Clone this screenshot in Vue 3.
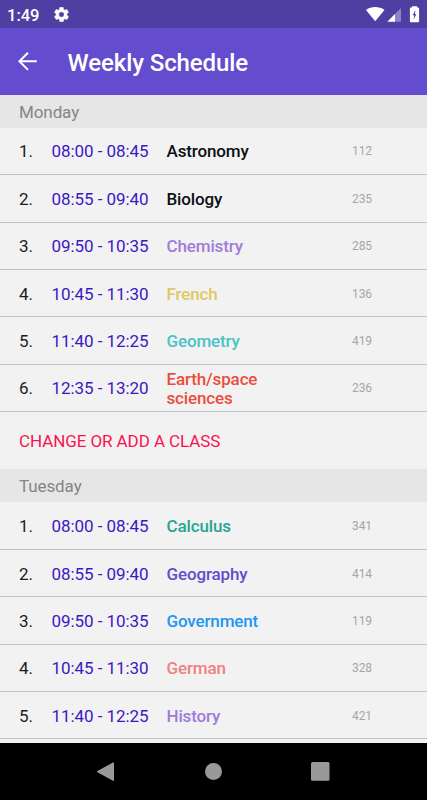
<template>
  <div class="screen">
    <div class="status-bar">
      <span class="clock">1:49</span>
      <svg class="gear" viewBox="2 2 20 20" width="15" height="15" fill="#fff" stroke="#fff" stroke-width=".6">
        <path d="M19.14 12.94c.04-.3.06-.61.06-.94s-.02-.64-.07-.94l2.03-1.58a.49.49 0 0 0 .12-.61l-1.92-3.32a.49.49 0 0 0-.59-.22l-2.39.96a7 7 0 0 0-1.62-.94l-.36-2.54a.48.48 0 0 0-.48-.41h-3.84a.48.48 0 0 0-.47.41l-.36 2.54a7 7 0 0 0-1.62.94l-2.39-.96a.48.48 0 0 0-.59.22L2.74 8.87a.48.48 0 0 0 .12.61l2.03 1.58a6 6 0 0 0 0 1.88l-2.03 1.58a.49.49 0 0 0-.12.61l1.92 3.32c.12.22.37.29.59.22l2.39-.96c.5.38 1.03.7 1.62.94l.36 2.54c.05.24.24.41.48.41h3.84c.24 0 .44-.17.47-.41l.36-2.54a7 7 0 0 0 1.62-.94l2.39.96c.22.08.47 0 .59-.22l1.92-3.32a.48.48 0 0 0-.12-.61zM12 15.6a3.6 3.6 0 1 1 0-7.2 3.6 3.6 0 0 1 0 7.2z"/>
      </svg>
      <svg class="signals" viewBox="0 0 56 18" width="56" height="18" fill="#fff">
        <path d="M0 4.9C5.500 1.1 13 1.1 18.500 4.900L9.200 16.200z"/>
        <path d="M35 3.100V16.700H21.400z" opacity=".35"/>
        <path d="M29 9.100V16.700H21.400z"/>
        <path fill-rule="evenodd" d="M46 2.500V1.300h5V2.500h1.100q1 0 1 1v12.800q0 1-1 1h-7.200q-1 0-1-1V3.500q0-1 1-1zM49.500 5l-2.800 5.200h1.500l-.6 4.200 2.800-5.200h-1.500z"/>
      </svg>
    </div>

    <header class="app-bar">
      <svg class="back" viewBox="0 0 20 20" width="20" height="20" fill="none" stroke="#fff" stroke-width="2">
        <path d="M19.800 10.300H2.400M11 1.700L2.400 10.300l8.600 8.600"/>
      </svg>
      <h1>Weekly Schedule</h1>
    </header>

    <main class="schedule">
      <section v-for="(day, d) in days" :key="day.name">
        <h2 class="day">{{ day.name }}</h2>
        <div v-for="(item, i) in day.classes" :key="i" class="lesson">
          <span class="number">{{ i + 1 }}.</span>
          <span class="time">{{ item.time }}</span>
          <span class="subject" :style="{ color: item.color }">{{ item.subject }}</span>
          <span class="room">{{ item.room }}</span>
        </div>
        <button v-if="d < days.length - 1" class="change">CHANGE OR ADD A CLASS</button>
      </section>
    </main>

    <nav class="nav-bar">
      <svg viewBox="0 0 427 57" width="427" height="57" fill="#999">
        <path d="M114 20v17.200q0 1.200-1 .6L97.400 29.200q-.8-.6 0-1.200L113 19.400q1-.6 1 .6z"/>
        <circle cx="213.500" cy="28.500" r="8.500"/>
        <rect x="311" y="19" width="18.500" height="18.800" rx="1.500"/>
      </svg>
    </nav>
  </div>
</template>

<script setup>
const days = [
  {
    name: 'Monday',
    classes: [
      { time: '08:00 - 08:45', subject: 'Astronomy', room: '112', color: '#0c1015' },
      { time: '08:55 - 09:40', subject: 'Biology', room: '235', color: '#0c1015' },
      { time: '09:50 - 10:35', subject: 'Chemistry', room: '285', color: '#a07bda' },
      { time: '10:45 - 11:30', subject: 'French', room: '136', color: '#dfc766' },
      { time: '11:40 - 12:25', subject: 'Geometry', room: '419', color: '#4bc2c5' },
      { time: '12:35 - 13:20', subject: 'Earth/space sciences', room: '236', color: '#eb4d3d' },
    ],
  },
  {
    name: 'Tuesday',
    classes: [
      { time: '08:00 - 08:45', subject: 'Calculus', room: '341', color: '#26a596' },
      { time: '08:55 - 09:40', subject: 'Geography', room: '414', color: '#634dce' },
      { time: '09:50 - 10:35', subject: 'Government', room: '119', color: '#2196f3' },
      { time: '10:45 - 11:30', subject: 'German', room: '328', color: '#f08080' },
      { time: '11:40 - 12:25', subject: 'History', room: '421', color: '#a07bda' },
    ],
  },
]
</script>

<style>
body {
  margin: 0;
}
</style>

<style scoped>
.screen {
  display: flex;
  flex-direction: column;
  width: 427px;
  height: 800px;
  overflow: hidden;
  background: #f2f2f2;
  font-family: Roboto, sans-serif;
}

.status-bar {
  display: flex;
  align-items: center;
  flex-shrink: 0;
  height: 28px;
  box-sizing: border-box;
  padding: 0 7px;
  background: #503fa3;
  color: #fff;
}

.clock {
  width: 46.5px;
  font-size: 16.5px;
  font-weight: 500;
  line-height: 28px;
  padding-top: 3px;
}

.signals {
  margin-left: auto;
  margin-right: -2px;
}

.app-bar {
  display: flex;
  align-items: center;
  flex-shrink: 0;
  height: 66.5px;
  box-sizing: border-box;
  padding-left: 17px;
  background: #634dce;
  color: #fff;
}

.back {
  margin-right: 30.6px;
}

h1 {
  margin: 3px 0 0;
  font-size: 24px;
  font-weight: 500;
  letter-spacing: -0.1px;
}

.schedule {
  flex: 1;
  min-height: 0;
  overflow: hidden;
}

.day {
  height: 33.3px;
  margin: 0;
  padding-left: 19px;
  background: #e6e6e6;
  color: #858585;
  font-size: 17px;
  font-weight: 400;
  line-height: 35px;
  letter-spacing: -0.1px;
}

.lesson {
  display: grid;
  grid-template-columns: 32.5px 115px 120px 1fr;
  align-items: center;
  height: 47.4px;
  box-sizing: border-box;
  padding: 2px 0 0 19px;
  border-bottom: 1px solid #c2c2c2;
  font-size: 17px;
  line-height: 19px;
}

.number {
  color: #1c1c1c;
}

.time {
  color: #3c18c2;
  letter-spacing: -0.06px;
}

.subject {
  font-weight: 500;
  letter-spacing: -0.14px;
}

.room {
  padding-left: 65.5px;
  color: #a6a6a6;
  font-size: 12px;
  letter-spacing: -0.1px;
}

.change {
  display: block;
  width: 100%;
  height: 57px;
  padding: 0 0 0 19px;
  border: 0;
  background: none;
  color: #fb1350;
  font: 400 17px Roboto, sans-serif;
  letter-spacing: -0.08px;
  text-align: left;
}

.nav-bar {
  flex-shrink: 0;
  height: 57px;
  background: #000;
}

.nav-bar svg {
  display: block;
}
</style>
